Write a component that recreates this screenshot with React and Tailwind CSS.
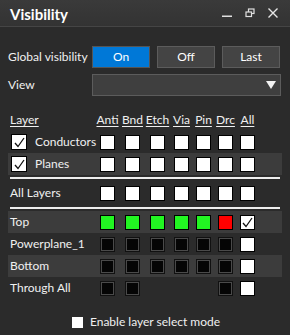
import React from 'react';

const COLS = ['Anti', 'Bnd', 'Etch', 'Via', 'Pin', 'Drc', 'All'];
const COL_W = ['w-[25px]', 'w-[25px]', 'w-[24px]', 'w-[22px]', 'w-[22px]', 'w-[22px]', 'w-[15px]'];

// cell kinds: w = white, wc = white checked, g = green, r = red, k = black, n = none
const ROWS_A = [
  { label: 'Conductors', check: true, cells: ['w', 'w', 'w', 'w', 'w', 'w', 'w'] },
  { label: 'Planes', check: true, cells: ['w', 'w', 'w', 'w', 'w', 'w', 'w'], hl: true },
];

const ROWS_B = [
  { label: 'Top', cells: ['g', 'g', 'g', 'g', 'g', 'r', 'wc'], hl: true },
  { label: 'Powerplane_1', cells: ['k', 'k', 'k', 'k', 'k', 'k', 'w'] },
  { label: 'Bottom', cells: ['k', 'k', 'k', 'k', 'k', 'k', 'w'], hl: true },
  { label: 'Through All', cells: ['k', 'k', 'n', 'n', 'n', 'k', 'w'] },
];

const Check = () => (
  <svg width="13" height="13" viewBox="0 0 13 13" className="block">
    <path d="M2 7 L5 10.5 L11 2" fill="none" stroke="#111" strokeWidth="1.3" />
  </svg>
);

const Box = ({ kind }) => {
  if (kind === 'n') return <div className="w-[15px] h-[15px]" />;
  if (kind === 'k')
    return (
      <div className="w-[15px] h-[15px] border border-[#111] bg-[#050505] flex">
        <div className="flex-1 border border-[#4a4a4a] bg-[#050505]" />
      </div>
    );
  const bg = kind === 'g' ? 'bg-[#22f522]' : kind === 'r' ? 'bg-[#ff0000]' : 'bg-white';
  return (
    <div className={`w-[15px] h-[15px] border border-black flex items-center justify-center ${bg}`}>
      {kind === 'wc' && <Check />}
    </div>
  );
};

const Row = ({ row }) => (
  <div className={`flex items-center h-[22px] pl-[2px] ${row.hl ? 'bg-[#3c3c3c]' : ''}`}>
    <div className="w-[90px] flex items-center gap-[8px] whitespace-nowrap">
      {row.check !== undefined && (
        <div className="ml-[1px] w-[16px] h-[16px] bg-white border border-black flex items-center justify-center">
          <Check />
        </div>
      )}
      <span>{row.label}</span>
    </div>
    {row.cells.map((c, i) => (
      <div key={i} className={COL_W[i]}>
        <Box kind={c} />
      </div>
    ))}
  </div>
);

export default function App() {
  return (
    <div
      className="w-[290px] h-[335px] bg-[#2b2b2b] text-[#f0f0f0] text-[12px] leading-[16px] overflow-hidden"
      style={{ fontFamily: 'Lato, "Noto Sans", sans-serif' }}
    >
      {/* title bar */}
      <div className="h-[27px] bg-gradient-to-b from-[#3a3a3a] to-[#333333] border-b border-[#454545] flex items-center pl-[10px] pr-[12px]">
        <span className="text-[15px] font-bold text-white flex-1 pt-[1px]">Visibility</span>
        <div className="flex items-center gap-[13px]">
          <svg width="10" height="10" viewBox="0 0 10 10">
            <rect x="0" y="7.5" width="10" height="1.5" fill="#e0e0e0" />
          </svg>
          <svg width="10" height="10" viewBox="0 0 10 10">
            <rect x="3.5" y="1" width="5.5" height="4.5" fill="none" stroke="#e0e0e0" strokeWidth="1.2" />
            <rect x="1" y="4" width="5.5" height="4.5" fill="#353535" stroke="#e0e0e0" strokeWidth="1.2" />
          </svg>
          <svg width="10" height="10" viewBox="0 0 10 10">
            <path d="M0.5 0.5 L9.5 9.5 M9.5 0.5 L0.5 9.5" stroke="#e6e6e6" strokeWidth="1.4" />
          </svg>
        </div>
      </div>

      {/* global visibility */}
      <div className="flex items-center mt-[19px] pl-[8px]">
        <span className="w-[84px] whitespace-nowrap">Global visibility</span>
        <div className="flex gap-[7px]">
          <button className="w-[58px] h-[22px] bg-[#0078d7] border border-[#555] text-white">On</button>
          <button className="w-[58px] h-[22px] bg-[#444444] border border-[#5c5c5c] text-white">Off</button>
          <button className="w-[58px] h-[22px] bg-[#444444] border border-[#5c5c5c] text-white">Last</button>
        </div>
      </div>

      {/* view */}
      <div className="flex items-center mt-[6px] pl-[8px]">
        <span className="w-[84px]">View</span>
        <div className="w-[189px] h-[22px] bg-[#3f3f3f] border border-[#5c5c5c] flex items-center justify-end pr-[4px]">
          <svg width="10" height="8" viewBox="0 0 10 8">
            <path d="M0 0 L10 0 L5 8 Z" fill="#f2f2f2" />
          </svg>
        </div>
      </div>

      {/* grid */}
      <div className="mx-[8px] mt-[13px] w-[274px]">
        <div className="flex items-center h-[22px] pl-[2px]">
          <div className="w-[90px]">
            <span className="underline underline-offset-2">Layer</span>
          </div>
          {COLS.map((c, i) => (
            <div key={c} className={COL_W[i]}>
              <div className="w-[15px] flex justify-center whitespace-nowrap">
                <span className="underline underline-offset-2">{c}</span>
              </div>
            </div>
          ))}
        </div>

        {ROWS_A.map((r) => (
          <Row key={r.label} row={r} />
        ))}

        <div className="h-[2px] bg-[#eeeeee] mx-[2px] mt-[2px] w-[270px]" />

        <div className="mt-[3px]">
          <Row row={{ label: 'All Layers', cells: ['w', 'w', 'w', 'w', 'w', 'w', 'w'] }} />
        </div>

        <div className="h-[2px] bg-[#eeeeee] mx-[2px] mt-[3px] mb-[2px] w-[270px]" />

        {ROWS_B.map((r) => (
          <Row key={r.label} row={r} />
        ))}
      </div>

      {/* footer */}
      <div className="flex items-center justify-center gap-[7px] mt-[15px] pl-[2px]">
        <div className="w-[11px] h-[11px] bg-white" />
        <span>Enable layer select mode</span>
      </div>
    </div>
  );
}
